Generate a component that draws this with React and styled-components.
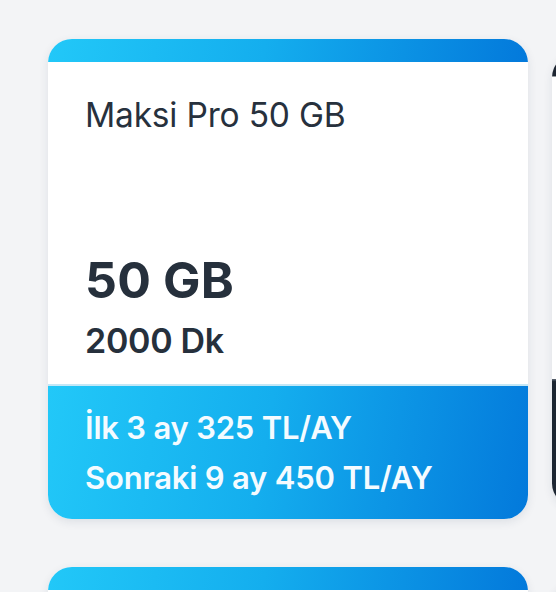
import React from 'react';
import styled, { createGlobalStyle } from 'styled-components';

const GlobalStyle = createGlobalStyle`
  html, body {
    margin: 0;
    padding: 0;
    background: #f3f4f6;
    font-family: Inter, "Noto Sans", sans-serif;
    overflow: hidden;
  }
`;

const gradient = 'linear-gradient(100deg, #22c8f8 0%, #14aeee 45%, #0379db 100%)';
const darkGradient = 'linear-gradient(100deg, #1d2632 0%, #252f3c 100%)';

// only the first card is in view; the others peek in from the edges of the list
const packages = [
  { id: 1, name: 'Maksi Pro 50 GB', data: '50 GB', minutes: '2000 Dk', first: 'İlk 3 ay 325 TL/AY', next: 'Sonraki 9 ay 450 TL/AY' },
  { id: 2, dark: true, peek: true },
  { id: 3 },
  { id: 4, dark: true, peek: true },
];

const Page = styled.main`
  display: grid;
  grid-template-columns: 480px 480px;
  column-gap: 24px;
  row-gap: 48px;
  padding: 39px 0 0 48px;
  width: max-content;
`;

const Card = styled.article`
  display: flex;
  flex-direction: column;
  width: 480px;
  height: 480px;
  border-radius: 24px;
  overflow: hidden;
  background: #fff;
  box-shadow: 0 3px 10px rgba(30, 50, 80, 0.1);
  transform: ${({ $peek }) => ($peek ? 'scale(0.94)' : 'none')};
  transform-origin: left 55%;
`;

const TopBar = styled.div`
  height: 23px;
  flex-shrink: 0;
  background: ${({ $dark }) => ($dark ? darkGradient : gradient)};
`;

const Body = styled.div`
  flex: 1;
  display: flex;
  flex-direction: column;
  padding: 0 37px;
`;

const Title = styled.h3`
  margin: 33px 0 0;
  font-size: 33.5px;
  font-weight: 400;
  line-height: 40px;
  color: #27313d;
  letter-spacing: -0.2px;
`;

const Data = styled.div`
  margin-top: auto;
  font-size: 50px;
  font-weight: 700;
  line-height: 52px;
  color: #26303c;
  letter-spacing: 0.2px;
`;

const Minutes = styled.div`
  margin: 15px 0 23px;
  font-size: 34px;
  font-weight: 600;
  line-height: 40px;
  color: #26303c;
  letter-spacing: -0.3px;
`;

const Footer = styled.div`
  height: 135px;
  flex-shrink: 0;
  box-sizing: border-box;
  display: flex;
  flex-direction: column;
  justify-content: center;
  padding: 0 37px;
  border-top: 2px solid ${({ $dark }) => ($dark ? '#3a4552' : '#c3e7f6')};
  background: ${({ $dark }) => ($dark ? darkGradient : gradient)};
`;

const Price = styled.div`
  font-size: 31px;
  font-weight: 600;
  line-height: 50px;
  color: #f4fbff;
  letter-spacing: -0.2px;
  white-space: nowrap;
`;

export default function App() {
  return (
    <>
      <GlobalStyle />
      <Page>
        {packages.map((p) => (
          <Card key={p.id} $peek={p.peek}>
            <TopBar $dark={p.dark} />
            <Body>
              {p.name && <Title>{p.name}</Title>}
              {p.data && <Data>{p.data}</Data>}
              {p.minutes && <Minutes>{p.minutes}</Minutes>}
            </Body>
            <Footer $dark={p.dark}>
              {p.first && <Price>{p.first}</Price>}
              {p.next && <Price>{p.next}</Price>}
            </Footer>
          </Card>
        ))}
      </Page>
    </>
  );
}
